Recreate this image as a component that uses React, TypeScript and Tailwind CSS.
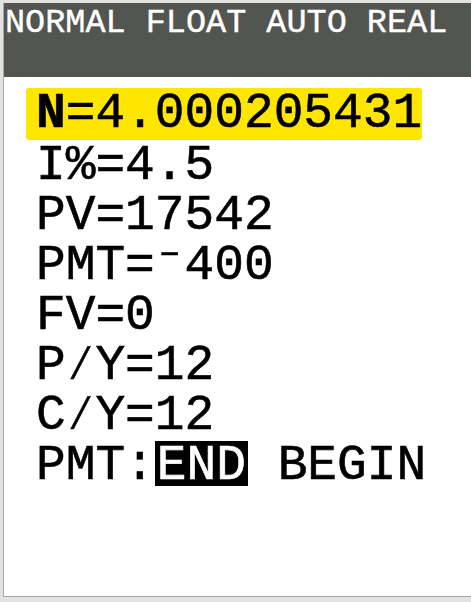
import React from 'react'

const mono = { fontFamily: '"Liberation Mono", "DejaVu Sans Mono", monospace' }

const rows = ['I%=4.5', 'PV=17542', 'PMT=\u207B400', 'FV=0', 'P\u2215Y=12', 'C\u2215Y=12']

export default function App() {
  return (
    <div className="w-[471px] h-[602px] bg-[#e2e2e2] pl-[3px] pt-[3px] pb-[5px] overflow-hidden" style={mono}>
      <div className="h-full bg-white border-l border-b border-[#a8a8a8] flex flex-col">
        {/* status bar */}
        <div className="h-[74px] bg-[#535551] text-white text-[33.5px] leading-[38px] pt-[1px] pl-[1px] whitespace-pre [-webkit-text-stroke:0.4px_white]">
          NORMAL FLOAT AUTO REAL
        </div>

        <div className="text-black text-[49.5px] whitespace-pre [-webkit-text-stroke:0.6px_currentColor]">
          {/* highlighted line */}
          <div className="pl-[22px]">
            <span className="inline-block bg-[#ffe600] rounded-[3px] pl-[10px] pr-0 h-[52px] leading-[52px]">
              <span className="font-bold">N</span>=4.000205431
            </span>
          </div>
          <div className="pl-[32px] leading-[50px] -mt-[10px]">
            {rows.map((r, i) => (
              <div key={i}>{r}</div>
            ))}
            <div>
              PMT:<span className="inline-block align-top h-[45px] leading-[51px] bg-black text-white px-[2px] [-webkit-text-stroke:0.6px_white]">END</span> BEGIN
            </div>
          </div>
        </div>
      </div>
    </div>
  )
}
